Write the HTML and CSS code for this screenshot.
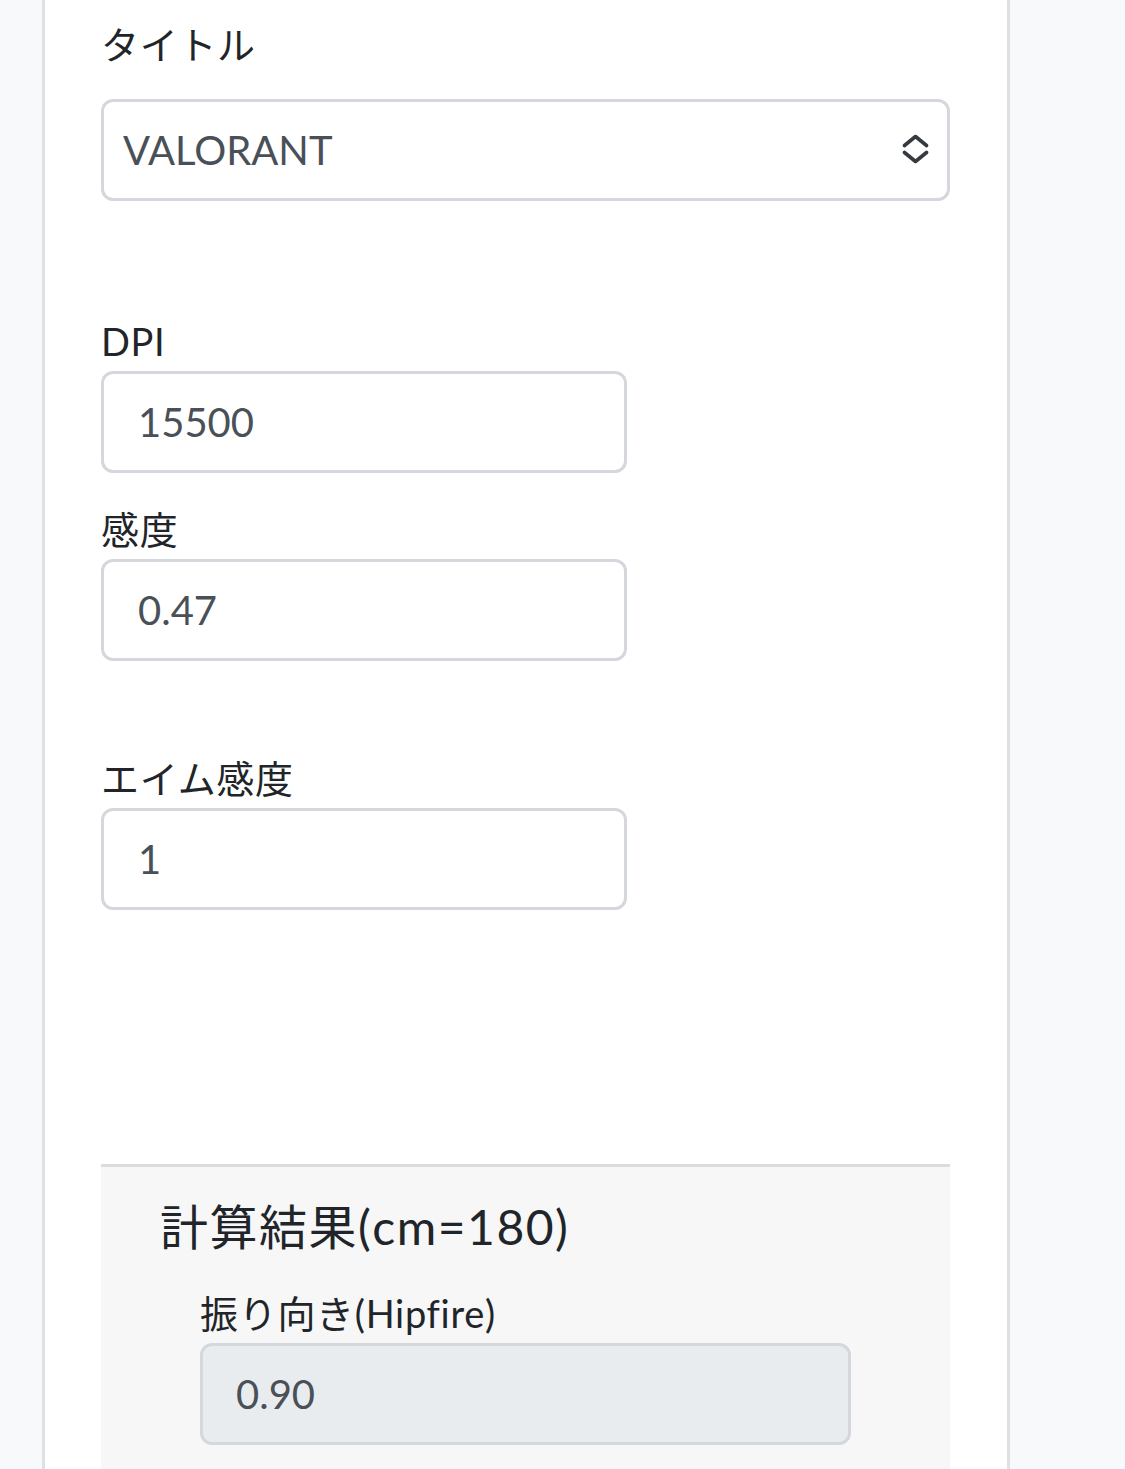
FILE: index.html
```html
<!DOCTYPE html>
<html lang="ja">
<head>
    <meta charset="UTF-8">
    <meta name="viewport" content="width=device-width, initial-scale=1.0">
    <title>振り向き計算</title>
    <link rel="stylesheet" href="styles.css">
</head>
<body>

    <div class="container">
        <div class="form-group title-group">
            <label for="title">タイトル</label>
            <div class="select-wrap">
                <select id="title" class="form-select">
                    <option>VALORANT</option>
                    <option>Apex Legends</option>
                    <option>Overwatch 2</option>
                </select>
                <svg class="select-icon" width="27" height="30" viewBox="0 0 27 30" fill="none" stroke="#343a40" stroke-width="3.6" stroke-linecap="round" stroke-linejoin="round">
                    <path d="M2.5 11.5 L13.5 2.5 L24.5 11.5"/>
                    <path d="M2.5 18.5 L13.5 27.5 L24.5 18.5"/>
                </svg>
            </div>
        </div>

        <div class="form-group dpi-group">
            <label for="dpi">DPI</label>
            <input type="text" id="dpi" class="form-input" value="15500">
        </div>

        <div class="form-group sens-group">
            <label for="sens">感度</label>
            <input type="text" id="sens" class="form-input" value="0.47">
        </div>

        <div class="form-group aim-group">
            <label for="aim">エイム感度</label>
            <input type="text" id="aim" class="form-input" value="1">
        </div>

        <div class="result">
            <h2>計算結果(cm=180)</h2>
            <div class="result-group">
                <label for="hipfire">振り向き(Hipfire)</label>
                <input type="text" id="hipfire" class="form-input readonly" value="0.90" readonly>
            </div>
        </div>
    </div>

</body>
</html>
```

FILE: styles.css
```css
body {
    font-family: Lato, "Noto Sans CJK JP", sans-serif;
    margin: 0;
    padding: 0;
    background-color: #f8f9fa;
    color: #212529;
}

.container {
    width: 849px;
    min-height: 1500px;
    margin-left: 42px;
    padding: 20px 57px 0 56px;
    background-color: white;
    border-left: 3px solid #e0e0e0;
    border-right: 3px solid #e0e0e0;
}

label {
    display: block;
    font-size: 38px;
    line-height: 48px;
    letter-spacing: 0.7px;
    margin-bottom: 6px;
}

.title-group label {
    margin-bottom: 31px;
}

.dpi-group {
    margin-top: 116px;
}

.sens-group {
    margin-top: 32px;
}

.aim-group {
    margin-top: 93px;
}

.select-wrap {
    position: relative;
}

.form-select,
.form-input {
    display: block;
    box-sizing: border-box;
    height: 102px;
    border: 3px solid #d4d7dc;
    border-radius: 12px;
    background-color: white;
    font-family: Lato, "Noto Sans CJK JP", sans-serif;
    font-size: 40px;
    color: #495057;
    outline: none;
}

.form-select {
    width: 849px;
    padding: 0 60px 0 19px;
    appearance: none;
    -webkit-appearance: none;
}

.select-icon {
    position: absolute;
    right: 21px;
    top: 35px;
    pointer-events: none;
}

.form-input {
    width: 526px;
    padding: 0 20px 0 34px;
}

.result {
    margin-top: 254px;
    padding: 31px 59px 40px;
    background-color: #f7f7f7;
    border-top: 3px solid #dcdcdc;
}

.result h2 {
    margin: 0;
    font-size: 48px;
    font-weight: normal;
    line-height: 57.6px;
    letter-spacing: 1.5px;
}

.result-group {
    margin: 33px 40px 0;
}

.result-group .form-input {
    width: 100%;
    padding-left: 33px;
}

.readonly {
    background-color: #e9ecef;
}
```
